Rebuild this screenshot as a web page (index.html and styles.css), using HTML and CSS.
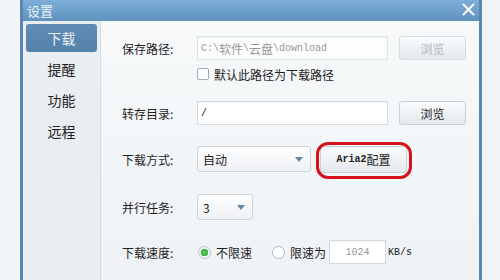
FILE: index.html
```html
<!DOCTYPE html>
<html lang="zh-CN">
<head>
<meta charset="utf-8">
<title>设置</title>
<link rel="stylesheet" href="styles.css">
</head>
<body>
<div class="dialog">
  <div class="titlebar">
    <span class="title">设置</span>
    <svg class="close" width="13" height="13" viewBox="0 0 13 13"><path d="M1.5 1.5 L11.5 11.5 M11.5 1.5 L1.5 11.5" stroke="#ffffff" stroke-width="2" stroke-linecap="round" fill="none"/></svg>
  </div>
  <div class="main">
    <nav class="sidebar">
      <div class="nav-item active">下载</div>
      <div class="nav-item">提醒</div>
      <div class="nav-item">功能</div>
      <div class="nav-item">远程</div>
    </nav>
    <section class="content">
      <div class="row row-save">
        <span class="label">保存路径:</span>
        <div class="input path disabled"><span class="mono">C:\</span><span class="cjk">软件</span><span class="mono">\</span><span class="cjk">云盘</span><span class="mono">\download</span></div>
        <button class="btn browse disabled">浏览</button>
      </div>
      <div class="row row-check">
        <span class="checkbox"></span>
        <span class="check-text">默认此路径为下载路径</span>
      </div>
      <div class="row row-transfer">
        <span class="label">转存目录:</span>
        <div class="input path"><span class="mono dark">/</span></div>
        <button class="btn browse">浏览</button>
      </div>
      <div class="row row-mode">
        <span class="label">下载方式:</span>
        <div class="select select-mode"><span>自动</span><span class="arrow"></span></div>
        <button class="btn aria"><span class="mono dark">Aria2</span><span class="cjk">配置</span></button>
      </div>
      <div class="row row-tasks">
        <span class="label">并行任务:</span>
        <div class="select select-tasks"><span>3</span><span class="arrow"></span></div>
      </div>
      <div class="row row-speed">
        <span class="label">下载速度:</span>
        <span class="radio on"></span>
        <span class="radio-text">不限速</span>
        <span class="radio off"></span>
        <span class="radio-text">限速为</span>
        <div class="input speed"><span class="mono">1024</span></div>
        <span class="mono dark unit">KB/s</span>
      </div>
    </section>
  </div>
</div>
</body>
</html>
```
FILE: styles.css
```css
* { box-sizing: border-box; }

html, body {
  margin: 0;
  padding: 0;
}

body {
  width: 500px;
  height: 280px;
  overflow: hidden;
  background: #f2f5f8;
  font-family: "Noto Sans CJK SC", "Noto Sans", sans-serif;
  font-size: 12px;
  color: #222;
}

.dialog {
  margin-left: 20px;
  width: 462px;
  height: 280px;
  border-left: 3px solid #5a87b0;
  border-right: 3px solid #5a87b0;
  display: flex;
  flex-direction: column;
}

.titlebar {
  height: 21px;
  flex: none;
  background: linear-gradient(#7caed8, #5f92c0);
  display: flex;
  align-items: center;
  justify-content: space-between;
  padding: 0 4px 0 4px;
}

.title {
  color: #eef4fa;
  font-size: 13px;
  line-height: 1;
}

.close { display: block; margin-top: -2px; }

.main {
  flex: 1;
  display: flex;
}

.sidebar {
  width: 78px;
  flex: none;
  background: #e8eef2;
  border-right: 1px solid #d3dbe2;
  padding: 3px 3px 0 3px;
}

.nav-item {
  height: 28px;
  margin-bottom: 3px;
  display: flex;
  align-items: center;
  justify-content: center;
  font-size: 14px;
  color: #1e1e1e;
}

.nav-item.active {
  background: linear-gradient(#5f8db6, #5482ab);
  color: #eef3f8;
  border-radius: 3px;
}

.content {
  flex: 1;
  background: linear-gradient(#f7f9fa, #eff3f6);
  padding: 15px 0 0 21px;
  display: flex;
  flex-direction: column;
}

.row {
  display: flex;
  align-items: center;
}

.label {
  width: 75px;
  flex: none;
  font-size: 12px;
  color: #1e1e1e;
}

.row-save { height: 24px; }
.row-check { height: 16px; margin-top: 6px; padding-left: 75px; }
.row-transfer { height: 24px; margin-top: 19px; }
.row-mode { height: 26px; margin-top: 21px; }
.row-tasks { height: 26px; margin-top: 22px; }
.row-speed { height: 24px; margin-top: 20px; }

.input {
  height: 24px;
  background: #ffffff;
  border: 1px solid #d3d9df;
  box-shadow: inset 0 1px 1px rgba(0,0,0,0.04);
  display: flex;
  align-items: center;
}

.input.path {
  width: 191px;
  padding-left: 3px;
}

.input.disabled { background: #fcfdfd; border-color: #dde2e6; }

.mono {
  font-family: "Liberation Mono", "DejaVu Sans Mono", monospace;
  font-size: 10px;
  color: #9a9a9a;
}

.mono.dark { color: #222; }

.cjk {
  font-size: 12px;
  color: #9a9a9a;
}

.btn {
  height: 24px;
  border: 1px solid #c9cfd5;
  border-radius: 3px;
  background: linear-gradient(#fbfcfd, #e3e8ec);
  font-family: "Noto Sans CJK SC", "Noto Sans", sans-serif;
  font-size: 12px;
  color: #222;
  padding: 0;
  display: flex;
  align-items: center;
  justify-content: center;
}

.btn.browse {
  width: 67px;
  margin-left: 11px;
}

.btn.disabled {
  color: #b2b8be;
  border-color: #d6dbe0;
}

.btn.aria {
  width: 87px;
  height: 27px;
  margin-left: 9px;
  position: relative;
}

.btn.aria .mono { font-weight: bold; }
.btn.aria .cjk { color: #222; }

.btn.aria::after {
  content: "";
  position: absolute;
  left: -5px;
  right: -6px;
  top: -5px;
  bottom: -7px;
  border: 3px solid #d5121c;
  border-radius: 12px;
}

.checkbox {
  width: 12px;
  height: 12px;
  border: 1px solid #a3adb7;
  border-radius: 2px;
  background: #ffffff;
  flex: none;
}

.check-text {
  margin-left: 5px;
  font-size: 12px;
}

.select {
  height: 26px;
  border: 1px solid #cdd3d9;
  border-radius: 3px;
  background: linear-gradient(#ffffff, #eef1f4);
  display: flex;
  align-items: center;
  justify-content: space-between;
  padding: 0 7px 0 5px;
  font-size: 12px;
}

.select-mode { width: 114px; }
.select-tasks { width: 56px; }

.arrow {
  width: 0;
  height: 0;
  border-left: 4px solid transparent;
  border-right: 4px solid transparent;
  border-top: 5px solid #6385a6;
}

.radio {
  width: 13px;
  height: 13px;
  border-radius: 50%;
  flex: none;
}

.radio.on {
  margin-left: 1px;
  border: 1px solid #b7c3cd;
  background: radial-gradient(circle, #5dcc5d 0, #3fb04a 3.5px, #e6edf2 4px, #ffffff 6px);
}

.radio.off {
  margin-left: 20px;
  border: 1.5px solid #a9b9c8;
  background: #ffffff;
}

.radio-text {
  margin-left: 5px;
  font-size: 12px;
}

.input.speed {
  width: 57px;
  margin-left: 3px;
  justify-content: center;
}

.unit { margin-left: 2px; }
```
